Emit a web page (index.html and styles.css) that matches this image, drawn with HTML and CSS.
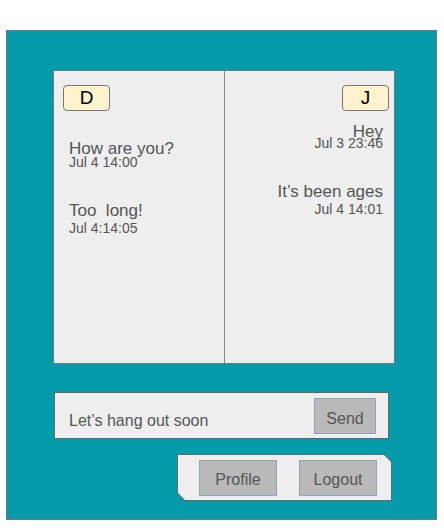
FILE: index.html
```html
<!DOCTYPE html>
<html lang="en">
<head>
  <meta charset="UTF-8" />
  <meta name="viewport" content="width=device-width, initial-scale=1.0"/>
  <title>Chat</title>
  <link rel="stylesheet" href="styles.css">
</head>
<body>

<div class="panel">

  <!-- Conversation -->
  <div class="chat">
    <div class="pane pane-left">
      <div class="badge">D</div>
      <div class="msg overlap">
        <div class="msg-text">How are you?</div>
        <div class="msg-time">Jul 4 14:00</div>
      </div>
      <div class="msg">
        <div class="msg-text">Too&nbsp; long!</div>
        <div class="msg-time">Jul 4:14:05</div>
      </div>
    </div>
    <div class="pane pane-right">
      <div class="badge">J</div>
      <div class="msg overlap">
        <div class="msg-text">Hey</div>
        <div class="msg-time">Jul 3 23:46</div>
      </div>
      <div class="msg">
        <div class="msg-text">It’s been ages</div>
        <div class="msg-time">Jul 4 14:01</div>
      </div>
    </div>
  </div>

  <!-- Compose -->
  <div class="compose">
    <span class="compose-text">Let’s hang out soon</span>
    <button class="btn">Send</button>
  </div>

  <!-- Nav -->
  <div class="nav">
    <div class="nav-inner">
      <button class="btn btn-wide">Profile</button>
      <button class="btn btn-wide">Logout</button>
    </div>
  </div>

</div>

</body>
</html>
```

FILE: styles.css
```css
* {
  box-sizing: border-box;
}
body {
  margin: 0;
  padding: 30px 0 0 6px;
  background: #fff;
  font-family: 'Liberation Sans', Arial, sans-serif;
  color: #555;
}
.panel {
  width: 431px;
  height: 490px;
  background: #039aaa;
  border: 1px solid #777;
  padding: 39px 0 0 46px;
  display: flex;
  flex-direction: column;
  align-items: flex-start;
}

.chat {
  width: 342px;
  height: 294px;
  background: #eee;
  border: 1px solid #777;
  display: grid;
  grid-template-columns: 171px 1fr;
}
.pane {
  padding-top: 14px;
  display: flex;
  flex-direction: column;
}
.pane-left {
  border-right: 1px solid #888;
  padding-left: 9px;
  align-items: flex-start;
}
.pane-right {
  padding-right: 5px;
  align-items: flex-end;
  text-align: right;
}
.badge {
  width: 47px;
  height: 26px;
  background: #fff2cc;
  border: 1px solid #777;
  border-radius: 4px;
  color: #000;
  font-size: 19px;
  line-height: 24px;
  text-align: center;
}
.msg {
  margin-top: 32px;
}
.pane-left .msg {
  margin-left: 6px;
}
.pane-right .msg {
  margin-right: 6px;
}
.pane-left .badge + .msg {
  margin-top: 29px;
}
.pane-right .badge + .msg {
  margin-top: 12px;
}
.msg-text {
  font-size: 17px;
  line-height: 18px;
}
.msg-time {
  font-size: 14px;
  line-height: 16px;
}
.pane-left .overlap .msg-time {
  margin-top: -4px;
}
.pane-right .overlap .msg-time {
  margin-top: -6px;
}

.compose {
  margin-top: 28px;
  margin-left: 1px;
  width: 335px;
  height: 47px;
  background: #eee;
  border: 1px solid #666;
  display: flex;
  align-items: center;
  justify-content: space-between;
  padding: 0 12px 0 14px;
}
.compose-text {
  font-size: 16px;
  line-height: 18px;
  align-self: flex-end;
  padding-bottom: 8px;
}
.btn {
  width: 62px;
  height: 36px;
  background: #b9b9b9;
  border: 1px solid #8fa5af;
  color: #555;
  font-family: inherit;
  font-size: 16px;
  padding: 5px 0 0;
  margin-top: 1px;
}
.btn-wide {
  width: 78px;
  margin-top: 0;
  padding-top: 4px;
}

.nav {
  margin-top: 15px;
  margin-left: 124px;
  width: 215px;
  height: 47px;
  background: #666;
  padding: 1px;
  clip-path: polygon(0 0, calc(100% - 8px) 0, 100% 8px, 100% 100%, 8px 100%, 0 calc(100% - 8px));
}
.nav-inner {
  height: 100%;
  background: #eee;
  display: flex;
  align-items: center;
  gap: 22px;
  padding-left: 21px;
  clip-path: polygon(0 0, calc(100% - 7px) 0, 100% 7px, 100% 100%, 7px 100%, 0 calc(100% - 7px));
}
```
